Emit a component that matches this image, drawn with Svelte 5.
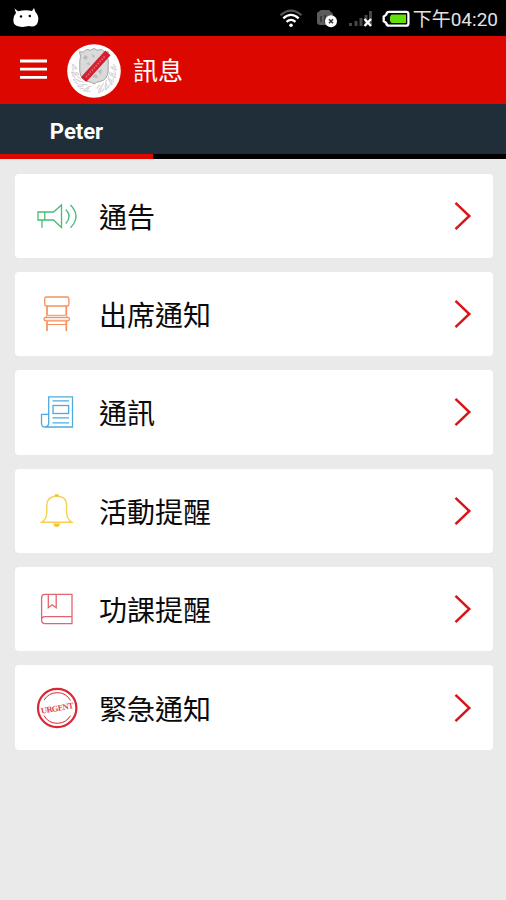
<script lang="ts">
  const items = [
    { icon: 'notice', label: '通告' },
    { icon: 'chair', label: '出席通知' },
    { icon: 'news', label: '通訊' },
    { icon: 'bell', label: '活動提醒' },
    { icon: 'book', label: '功課提醒' },
    { icon: 'urgent', label: '緊急通知' },
  ]
  const leaves = [-100, -80, -60, -40, -20, 20, 40, 60, 80, 100]
</script>

<div class="screen">
  <div class="status">
    <svg class="droid" width="26" height="20" viewBox="0 0 26 20">
      <path
        d="M1.5 0.5 5 3.3Q13 1.2 19 3L21 0 22.3 3.8Q26 8 25.2 12.5 24.5 18.5 18.5 18.5 16 17.6 13 18.5 9 19.4 6 18.5 .3 17.6 .3 12 .4 7.5 3 5Z"
        fill="#fff"
      />
      <circle cx="8" cy="8.5" r="1.2" />
      <circle cx="16.8" cy="8" r="1.2" />
    </svg>
    <svg class="wifi" width="24" height="20" viewBox="0 0 24 20" fill="none" stroke-width="2.1">
      <path d="M1.5 6.3Q12-3 22.5 6.3" stroke="#555" />
      <path d="M4.3 9.3Q12 2.5 19.7 9.3M7.5 12.8Q12 9 16.5 12.8" stroke="#fff" stroke-width="2.3" />
      <circle cx="12" cy="16.3" r="1.8" fill="#fff" />
    </svg>
    <svg class="sync" width="22" height="20" viewBox="0 0 22 20">
      <path d="M5 1H13L17 5V16H4Q1 16 1 13V4Z" fill="#5c5c5c" />
      <path d="M5 7V13M9 6V14" stroke="#333" stroke-width="1.6" />
      <circle cx="15" cy="12.3" r="6" fill="#fff" />
      <path d="M13 10.3 17 14.3M17 10.3 13 14.3" stroke="#333" stroke-width="1.6" />
    </svg>
    <svg class="signal" width="26" height="20" viewBox="0 0 26 20">
      <path d="M1 14H4V17H1ZM6.5 12H9.5V17H6.5ZM11.5 9H14.5V17H11.5ZM16.5 6H19.5V17H16.5ZM21 2H24V17H21Z" fill="#484848" />
      <path d="M16.5 10 23 17M23 10 16.5 17" stroke="#fff" stroke-width="2.3" />
    </svg>
    <svg class="battery" width="28" height="18" viewBox="0 0 28 18">
      <path d="M7 1.8H24.3Q26.4 1.8 26.4 4V13.5Q26.4 15.7 24.3 15.7H7Q4.5 15.7 4.2 13L1.7 11.2V6.5L4.2 4.7Q4.5 1.8 7 1.8Z" fill="none" stroke="#fff" stroke-width="2.3" />
      <path d="M9.5 4.5H24V13H9.5L8 11V6.5Z" fill="#62e00e" />
    </svg>
    <span class="time">下午04:20</span>
  </div>

  <header>
    <svg class="menu" width="27" height="20" viewBox="0 0 27 20">
      <path d="M0 2H27M0 10.2H27M0 18.4H27" stroke="#fff" stroke-width="2.8" />
    </svg>
    <svg class="logo" width="54" height="54" viewBox="0 0 54 54">
      <circle cx="27" cy="27" r="26.8" fill="#fff" />
      <g fill="none" stroke="#d2d2d2" stroke-width="1">
        {#each leaves as angle}
          <path transform="rotate({angle} 27 27) translate(27 47)" d="M-3 2.5Q-2.5-1 1-2.5 1 1-3 2.5M0 2.5 3.5 0" />
          <path transform="rotate({angle * 0.8} 27 27) translate(27 44)" d="M-2 1Q-1-1.5 2-1.5" />
        {/each}
      </g>
      <path d="M12.5 8Q17 9 19.5 5.5 24 7.5 27 4.5 30 7.5 34.5 5.5 37 9 41.5 8 39.5 12 41.2 17V27Q40.5 36 33 37.5 29 38 27 40 25 38 21 37.5 13.5 36 12.8 27V17Q14.5 12 12.5 8Z" fill="#dadada" stroke="#a2a2a2" stroke-width="1" />
      <path d="M18 11 21 13 19 16 16 14ZM25 10 28 12 26 14ZM19 20 22 18 23 21ZM31 27 35 25 34 31ZM25 33 29 30 31 34Z" fill="#bababa" />
      <path d="M19 33 38.5 11.5" stroke="#d51f31" stroke-width="7.2" stroke-linecap="square" />
      <path d="M19 33 38.5 11.5" stroke="#e06b76" stroke-width="1.8" stroke-dasharray="1.6 1.3" />
    </svg>
    <h1>訊息</h1>
  </header>

  <nav>
    <div class="tab">Peter</div>
  </nav>

  <main>
    {#each items as item}
      <div class="card">
        <svg class="icon" width="60" height="60" viewBox="0 -1 60 60" fill="none">
          {#if item.icon === 'notice'}
            <g stroke="#45bb74" stroke-width="1.3">
              <path d="M8 25H23.5L31.5 18V40.5L23.5 33H8ZM14.8 25V33M12 33V40.8" />
              <path d="M35.8 22.5Q42.5 29.3 35.8 36.5M40.5 18Q51.5 29.3 40.5 40.8" />
            </g>
          {:else if item.icon === 'chair'}
            <g stroke="#f4915e" stroke-width="1.3">
              <rect x="14.7" y="12" width="24.2" height="9" rx="1.8" />
              <rect x="14" y="32.3" width="25.5" height="3.6" rx="1.8" fill="#fdeae0" />
              <path d="M15.8 32 17.5 30.3H35.8L37.6 32M17 39.5H36" stroke-width="1" />
              <path d="M17 21V30.5M36.3 21V30.5M17 36V46M36.3 36V46" stroke-width="1.7" />
            </g>
          {:else if item.icon === 'news'}
            <g stroke="#4da9de" stroke-width="1.3">
              <path d="M18.7 13.8H42.5V44H15Q18.7 43.5 18.7 40ZM18.7 31.3H11.5V40.5Q11.5 44 15 44H40" />
              <path d="M22.5 17.8H39M22.5 34.8H39M22.5 39.8H39" />
              <rect x="23" y="22.5" width="15.6" height="8" />
            </g>
          {:else if item.icon === 'bell'}
            <path d="M11.8 40.2Q16.8 37 16.8 30V23.5Q16.8 14.2 26.7 14.2T36.6 23.5V30Q36.6 37 41.7 40.2Z" stroke="#f8cf55" stroke-width="1.4" />
            <path d="M24.3 14Q24.3 12 26.7 12T29.2 14ZM23.3 41.5H30Q29.5 45 26.7 45T23.3 41.5Z" fill="#f5c72c" />
          {:else if item.icon === 'book'}
            <g stroke="#e16470" stroke-width="1.3">
              <path d="M42 14.3H15Q11.6 14.3 11.6 18V40Q11.6 43.6 15 43.6H42ZM11.6 40Q11.6 36.7 15 36.7H42" />
              <path d="M18.3 14.5V27.8L22.2 24.8 26.2 27.8V14.5" />
            </g>
          {:else}
            <g stroke="#d92733">
              <circle cx="27.2" cy="29" r="19.2" stroke-width="2.2" />
              <circle cx="27.2" cy="29" r="15.3" stroke-width="1" stroke-dasharray="32 16.07" stroke-dashoffset="-8" />
            </g>
            <rect x="10.5" y="24" width="33.5" height="10" fill="#fff" transform="rotate(-10 27 29)" />
            <text x="27.3" y="32" class="stamp" transform="rotate(-10 27.3 29)" textLength="33">URGENT</text>
          {/if}
        </svg>
        <span class="label">{item.label}</span>
        <svg class="arrow" width="18" height="30" viewBox="0 0 18 30">
          <path d="M1.5 1.8 15.3 15 1.5 28.2" fill="none" stroke="#d91518" stroke-width="2.5" />
        </svg>
      </div>
    {/each}
  </main>
</div>

<style>
  :global(body) {
    margin: 0;
    background: #eaeaea;
  }
  .screen {
    width: 506px;
    height: 900px;
    overflow: hidden;
    background: #eaeaea;
    font-family: Roboto, 'Noto Sans CJK TC', sans-serif;
  }
  .status {
    display: flex;
    align-items: center;
    height: 36px;
    box-sizing: border-box;
    padding: 0 8px 0 13px;
    background: #000;
    color: #e2e2e2;
  }
  .status svg {
    flex: none;
  }
  .wifi {
    margin: 2px 0 0 auto;
  }
  .sync {
    margin: 2px 0 0 13px;
  }
  .signal {
    margin: 2px 0 0 10px;
  }
  .battery {
    margin: 2px 3px 0 8px;
  }
  .time {
    font-size: 19px;
    line-height: 36px;
    white-space: nowrap;
    padding-top: 4px;
  }
  header {
    display: flex;
    align-items: center;
    height: 68px;
    box-sizing: border-box;
    padding-left: 20px;
    background: #dc0800;
  }
  .menu {
    margin-right: 20px;
    margin-bottom: 2px;
  }
  .logo {
    margin-top: 1px;
  }
  h1 {
    margin: 3px 0 0 12px;
    font-size: 25px;
    font-weight: 400;
    line-height: 36px;
    color: #fff;
  }
  nav {
    height: 55px;
    box-sizing: border-box;
    background: #202e3a;
    border-bottom: 5px solid #000;
  }
  .tab {
    width: 153px;
    height: 55px;
    box-sizing: border-box;
    border-bottom: 5px solid #dc0800;
    color: #fff;
    font-size: 22px;
    font-weight: 700;
    line-height: 56px;
    text-align: center;
  }
  main {
    display: flex;
    flex-direction: column;
    gap: 14px;
    padding: 14.5px 13.5px 0 14.5px;
  }
  .card {
    display: flex;
    align-items: center;
    height: 84.4px;
    box-sizing: border-box;
    padding: 0 21px 0 15.5px;
    background: #fff;
    border-radius: 4px;
  }
  .label {
    flex: 1;
    margin-left: 9px;
    padding-top: 6px;
    font-size: 28px;
    line-height: 40px;
    color: #0a0a0a;
  }
  .stamp {
    font-family: 'Liberation Serif', serif;
    font-size: 8.5px;
    font-weight: 700;
    text-anchor: middle;
    fill: #e04650;
  }
</style>
